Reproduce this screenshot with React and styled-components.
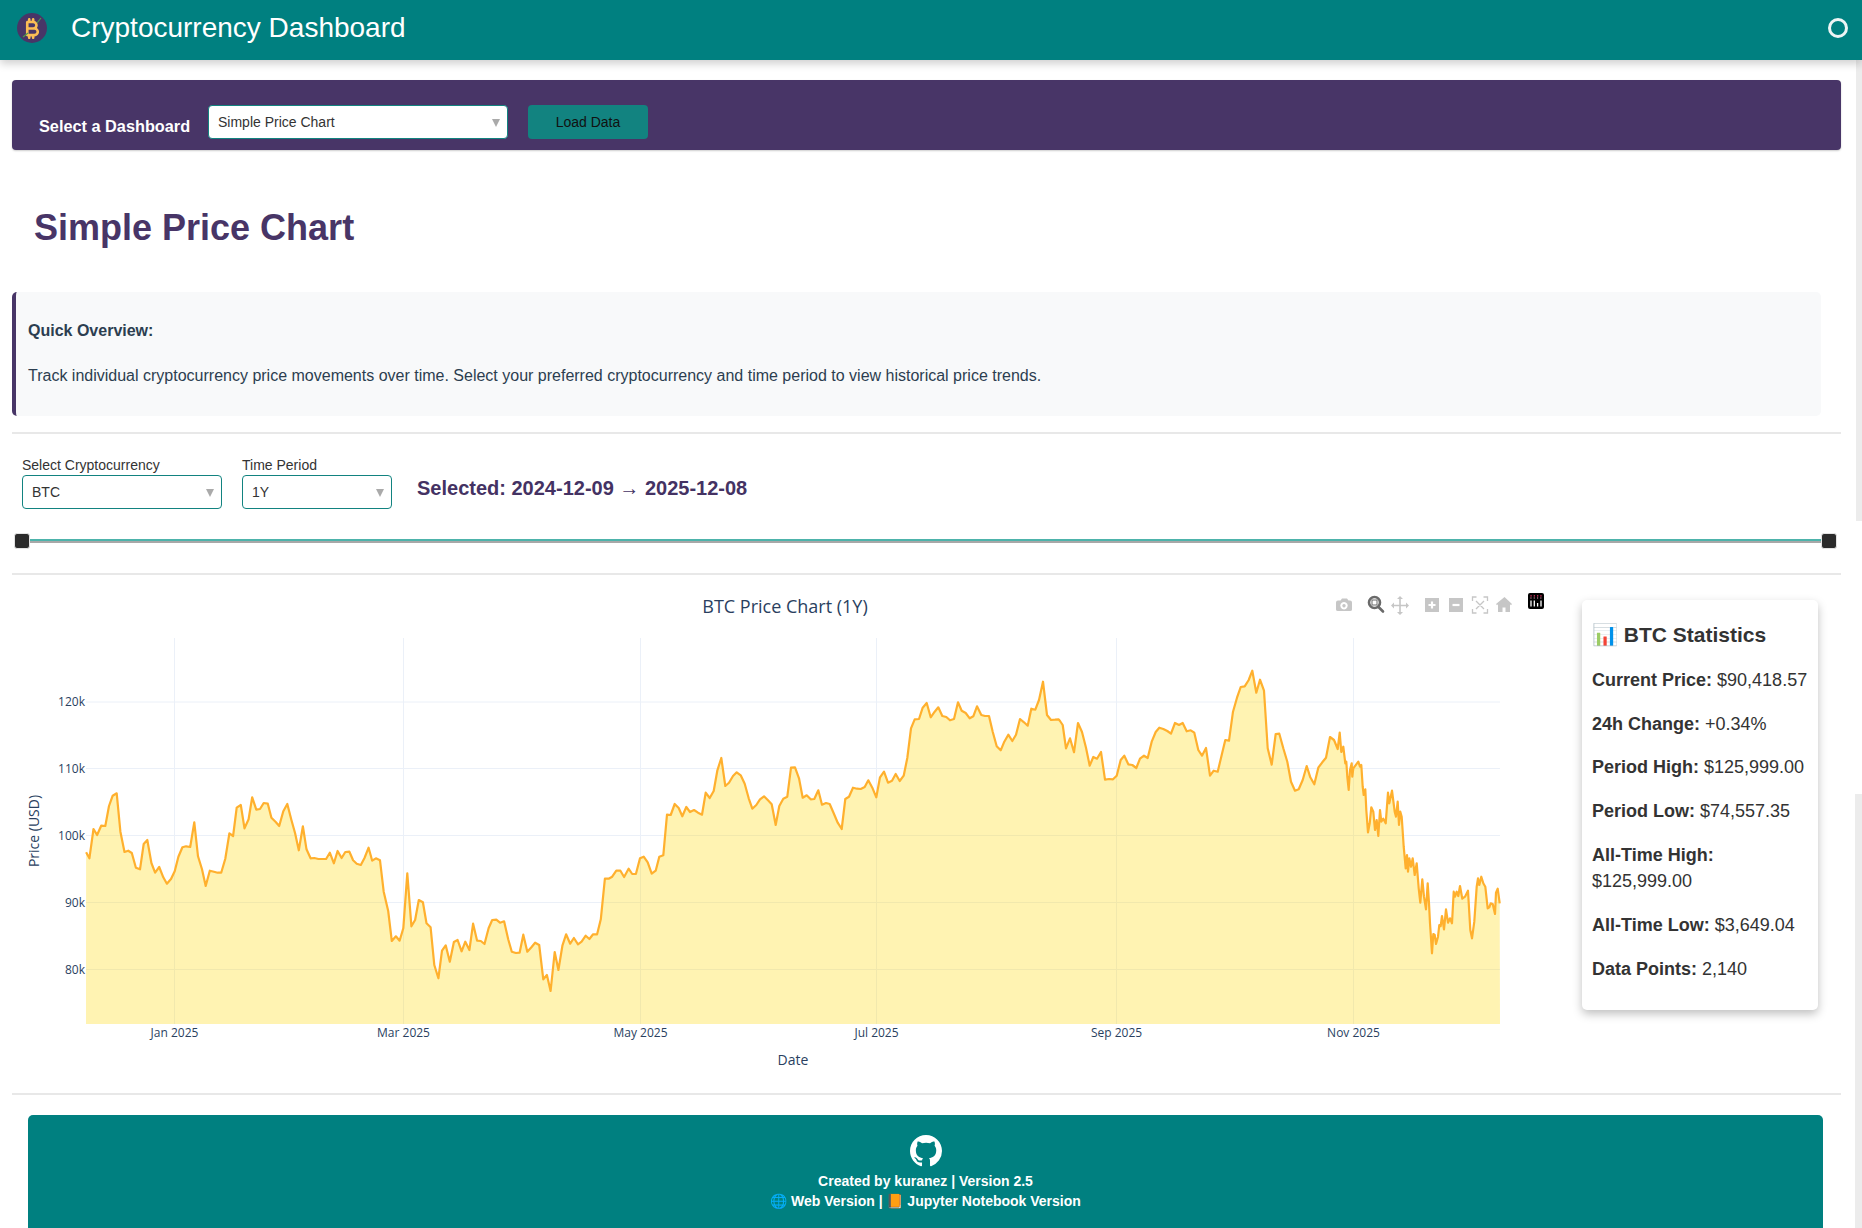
import React from 'react';
import styled, { createGlobalStyle } from 'styled-components';
import { BsGithub } from 'react-icons/bs';
import { FaBitcoinSign } from 'react-icons/fa6';

const GlobalStyle = createGlobalStyle`
  html, body {
    margin: 0;
    padding: 0;
    background: #fff;
    height: 100%;
    overflow: hidden;
  }
  body {
    font-family: "Liberation Sans", Arial, sans-serif;
    color: #212529;
  }
`;

const Page = styled.div`
  position: relative;
  width: 1862px;
  height: 1228px;
  overflow: hidden;
`;

const TopBar = styled.header`
  position: relative;
  z-index: 5;
  height: 60px;
  box-sizing: border-box;
  padding: 0 14px 4px 17px;
  display: flex;
  align-items: center;
  background: #008080;
  color: #fff;
  box-shadow: 0 4px 8px rgba(0, 0, 0, 0.18);
`;

const LogoBadge = styled.div`
  position: relative;
  width: 30px;
  height: 30px;
  border-radius: 50%;
  background: #483567;
  display: flex;
  align-items: center;
  justify-content: center;
  color: #fbbd55;
  font-size: 21px;
`;

const LogoSpark = styled.svg`
  position: absolute;
  inset: 0;
`;

const AppTitle = styled.h1`
  margin: 0 0 0 24px;
  font-size: 28px;
  font-weight: 400;
  line-height: 34px;
  flex: 1;
`;

const StatusRing = styled.div`
  width: 20px;
  height: 20px;
  box-sizing: border-box;
  border: 3px solid #eef5f5;
  border-radius: 50%;
`;

const ScrollStrip = styled.div`
  position: absolute;
  right: 0;
  top: ${(p) => p.$top}px;
  height: ${(p) => p.$height}px;
  width: ${(p) => p.$width}px;
  background: #ececec;
`;

const Main = styled.main`
  padding: 20px 21px 0 12px;
`;

const DashboardBar = styled.section`
  height: 70px;
  box-sizing: border-box;
  padding: 25px 0 0 27px;
  display: flex;
  align-items: flex-start;
  background: #483567;
  border-radius: 4px;
  box-shadow: 0 1px 2px rgba(0, 0, 0, 0.2);
`;

const BarLabel = styled.label`
  width: 169px;
  margin-top: 12px;
  font-size: 16.3px;
  font-weight: 700;
  line-height: 19px;
  color: #fff;
`;

const SelectBox = styled.div`
  position: relative;
  width: ${(p) => p.$width}px;
  height: 34px;
  box-sizing: border-box;
  padding: 0 10px 0 9px;
  display: flex;
  align-items: center;
  background: #fff;
  border: 1px solid #128380;
  border-radius: 4px;
  font-size: 14px;
  color: #333;

  &::after {
    content: '';
    position: absolute;
    right: 7px;
    top: 13px;
    border-left: 4px solid transparent;
    border-right: 4px solid transparent;
    border-top: 8px solid #aaa;
  }
`;

const LoadButton = styled.button`
  width: 120px;
  height: 34px;
  margin-left: 20px;
  padding: 0;
  border: none;
  border-radius: 4px;
  background: #128380;
  color: #111;
  font-family: inherit;
  font-size: 14px;
`;

const PageHeading = styled.h2`
  margin: 57px 0 43px 22px;
  font-size: 36px;
  font-weight: 700;
  line-height: 42px;
  color: #483567;
`;

const OverviewBox = styled.section`
  width: 1809px;
  height: 124px;
  box-sizing: border-box;
  padding: 27px 12px 0;
  background: #f8f9fa;
  border-left: 4px solid #483567;
  border-radius: 5px;
  font-size: 16px;
  line-height: 24px;
  color: #2c3e50;

  p {
    margin: 0 0 21px;
  }
`;

const Divider = styled.hr`
  margin: ${(p) => p.$top}px 0 0;
  height: 2px;
  border: none;
  background: #e8e8e8;
`;

const ControlRow = styled.div`
  margin: 21px 0 0 10px;
  display: flex;
  align-items: flex-start;
  gap: 20px;
`;

const Field = styled.div`
  display: flex;
  flex-direction: column;
`;

const FieldLabel = styled.label`
  font-size: 14px;
  line-height: 20px;
  color: #333;
`;

const SelectedRange = styled.div`
  margin: 23px 0 0 5px;
  font-size: 20px;
  font-weight: 700;
  line-height: 20px;
  color: #443263;

  span {
    font-weight: 400;
  }
`;

const RangeSlider = styled.div`
  position: relative;
  height: 16px;
  margin: 24px 4px 0 2px;
  display: flex;
  align-items: center;
  justify-content: space-between;

  &::before {
    content: '';
    position: absolute;
    left: 8px;
    right: 8px;
    top: 6px;
    height: 2px;
    background: #4db3ab;
    border-bottom: 2px solid #a8a8a8;
  }
`;

const RangeHandle = styled.div`
  position: relative;
  width: 16px;
  height: 16px;
  box-sizing: border-box;
  background: #2b2b2b;
  border: 1px solid #e4e4e4;
  border-radius: 3px;
`;

const ChartRow = styled.div`
  display: flex;
  align-items: flex-start;
  padding-top: 9px;
  height: 500px;
`;

const ChartSvg = styled.svg`
  display: block;
  flex: none;
`;

const TickLabel = styled.text`
  font-family: "Open Sans", sans-serif;
  font-size: 12px;
  fill: #2a3f5f;
`;

const AxisTitle = styled.text`
  font-family: "Open Sans", sans-serif;
  font-size: 14px;
  fill: #2a3f5f;
`;

const ChartTitle = styled.text`
  font-family: "Open Sans", sans-serif;
  font-size: 18px;
  fill: #2a3f5f;
`;

const StatsCard = styled.aside`
  width: 236px;
  height: 410px;
  margin-top: 16px;
  box-sizing: border-box;
  padding: 22px 10px 0;
  background: #fff;
  border-radius: 5px;
  box-shadow: 0 4px 10px rgba(0, 0, 0, 0.25);
  color: #333;
`;

const StatsTitle = styled.h3`
  margin: 0 0 20px;
  font-size: 21px;
  font-weight: 700;
  line-height: 25px;
`;

const StatLine = styled.p`
  margin: 0 0 17.1px;
  font-size: 18px;
  line-height: 26.6px;
`;

const Footer = styled.footer`
  width: 1795px;
  height: 140px;
  margin: 20px 0 0 16px;
  box-sizing: border-box;
  padding-top: 20px;
  display: flex;
  flex-direction: column;
  align-items: center;
  background: #008080;
  border-radius: 5px 5px 0 0;
  color: #fff;
  font-size: 14px;
  font-weight: 700;
  line-height: 20px;

  svg {
    margin-bottom: 4px;
    display: block;
  }
`;

// price trace, read off the chart in three stretches: [x, y] in crop coordinates
const left = [[211,697],[219,715],[229,627],[238,645],[248,617],[258,618],[267,558],[276,527],[286,520],[295,635],[305,696],[314,692],[323,699],[333,743],[343,748],[352,672],[361,660],[371,729],[380,758],[390,741],[400,772],[409,791],[419,777],[428,754],[437,710],[447,682],[456,679],[466,681],[476,607],[485,709],[495,748],[504,798],[514,752],[524,755],[533,758],[542,758],[552,716],[562,640],[571,648],[580,563],[590,555],[599,625],[609,598],[618,532],[628,569],[637,567],[646,549],[656,551],[665,593],[675,605],[684,618],[694,574],[704,552],[714,600],[723,640],[732,691],[742,619],[751,688],[761,715],[770,714],[780,717],[789,717],[799,717],[808,698],[818,730],[827,693],[837,714],[846,696],[856,695],[865,721],[874,731],[884,735],[893,714],[903,683],[912,722],[921,715],[931,721],[940,815],[951,873],[960,963],[970,949],[979,962],[988,925],[998,760],[1008,919],[1017,900],[1026,840],[1036,847],[1045,910],[1055,922],[1064,1035],[1074,1075],[1083,992],[1092,976],[1102,1025],[1112,966],[1121,960],[1131,994],[1140,965],[1150,990],[1159,911],[1169,962],[1178,963],[1187,972],[1197,925],[1206,900],[1216,899],[1225,908],[1235,904],[1245,958],[1254,995],[1264,999],[1273,998],[1282,944],[1292,995],[1302,982],[1311,968],[1321,975],[1331,1078],[1340,1065],[1349,1113],[1359,996],[1368,1050],[1378,977],[1387,943],[1397,971],[1406,954],[1416,973],[1425,965],[1435,947],[1444,957],[1453,943],[1463,943],[1472,898],[1482,776],[1491,776],[1500,770],[1510,752],[1520,752],[1529,771],[1540,746],[1549,762],[1558,762]];
const middle = [[60,715],[71,710],[83,727],[95,761],[107,752],[118,710],[130,706],[141,584],[152,585],[164,552],[176,564],[187,589],[199,561],[210,576],[222,570],[234,578],[246,584],[257,518],[269,534],[281,513],[292,452],[304,414],[316,498],[327,488],[339,468],[350,457],[362,466],[374,491],[386,535],[397,566],[409,555],[420,538],[432,529],[444,541],[455,553],[467,615],[478,558],[490,536],[502,530],[513,443],[525,442],[537,475],[548,533],[560,526],[572,538],[583,537],[595,511],[606,554],[618,549],[629,552],[641,580],[653,608],[665,627],[676,537],[687,530],[699,503],[711,506],[722,507],[734,501],[745,481],[757,503],[769,532],[780,472],[792,455],[804,488],[816,482],[827,462],[839,483],[851,467],[862,414],[873,325],[884,298],[897,297],[908,263],[920,249],[932,292],[944,275],[955,262],[967,288],[979,291],[990,301],[1002,297],[1014,247],[1025,272],[1037,279],[1049,295],[1060,289],[1071,259],[1084,285],[1095,288],[1107,288],[1118,335],[1130,379],[1142,391],[1153,365],[1165,344],[1177,363],[1188,344],[1200,297],[1212,307],[1223,317],[1234,266],[1246,269],[1257,240],[1269,185],[1281,285],[1293,300],[1305,299],[1316,298]];
const right = [[0,303],[8,315],[18,385],[30,355],[42,397],[54,309],[66,336],[78,383],[89,437],[100,411],[111,416],[123,396],[135,479],[147,477],[159,478],[170,467],[182,420],[193,407],[205,433],[217,435],[229,444],[240,416],[252,407],[263,414],[275,365],[287,336],[298,323],[310,327],[322,333],[333,341],[345,309],[357,315],[368,309],[380,334],[392,331],[403,338],[415,390],[426,407],[438,384],[450,467],[461,452],[473,455],[485,405],[496,360],[507,362],[519,275],[531,233],[542,201],[554,199],[566,180],[577,152],[589,218],[600,179],[612,212],[623,385],[635,434],[647,342],[658,341],[670,385],[682,425],[693,485],[705,512],[716,508],[728,480],[740,438],[751,472],[763,493],[775,443],[787,427],[798,413],[810,351],[822,360],[833,387],[839,338],[844,396],[850,380],[856,430],[859,425],[862,470],[866,510],[870,450],[875,430],[877,470],[880,445],[895,425],[900,440],[904,435],[908,500],[911,525],[916,508],[919,570],[924,637],[929,610],[934,562],[940,575],[945,630],[950,600],[955,648],[960,570],[964,605],[970,596],[977,610],[984,518],[988,550],[996,512],[1004,575],[1008,590],[1013,545],[1017,615],[1021,575],[1025,590],[1031,680],[1037,745],[1041,705],[1044,755],[1048,715],[1053,740],[1058,715],[1064,765],[1070,730],[1076,805],[1081,848],[1087,778],[1092,830],[1098,868],[1103,790],[1107,850],[1110,910],[1116,1000],[1120,942],[1124,945],[1128,972],[1134,950],[1138,915],[1142,918],[1146,888],[1152,928],[1158,868],[1164,908],[1170,895],[1176,910],[1181,815],[1185,830],[1190,815],[1195,828],[1200,798],[1207,836],[1215,830],[1224,812],[1231,930],[1236,955],[1243,905],[1250,800],[1254,775],[1258,795],[1264,770],[1270,790],[1276,800],[1283,865],[1288,862],[1292,850],[1298,852],[1305,882],[1308,818],[1313,806],[1319,850]];

const toPage = (pts, fx) => pts.map(([x, y]) => [fx(x), 620 + y / 3]);
const trace = [
  ...toPage(left, (x) => x / 2.45),
  ...toPage(middle, (x) => 620 + x / 3),
  ...toPage(right, (x) => 1060 + x / 3),
];
const linePts = trace.map(([x, y]) => `${x.toFixed(1)},${y.toFixed(1)}`).join(' ');
const plotLeft = 86;
const plotRight = 1500;
const plotTop = 638;
const plotBottom = 1024;
const areaPts = `${plotLeft},${plotBottom} ${linePts} ${plotRight},${plotBottom}`;

const xTicks = [
  [174.5, 'Jan 2025'],
  [403.5, 'Mar 2025'],
  [640.5, 'May 2025'],
  [876.5, 'Jul 2025'],
  [1116.5, 'Sep 2025'],
  [1353.5, 'Nov 2025'],
];
const yTicks = [
  [702, '120k'],
  [768.5, '110k'],
  [835.5, '100k'],
  [902.5, '90k'],
  [969.5, '80k'],
];

function ModeBar() {
  const grey = '#c6c6c6';
  return (
    <g>
      {/* camera */}
      <path fill={grey} fillRule="evenodd" d="M1336 602.5q0-2 2-2h2.5l1.5-2h5l1.500 2h1.500q2 0 2 2v7q0 1.500-2 1.500h-12q-2 0-2-1.500zM1344 602a3.700 3.700 0 1 0 .01 0zM1344 604a1.700 1.700 0 1 1-.01 0z" />
      {/* zoom, active */}
      <circle cx="1374.500" cy="602.500" r="5.500" fill="none" stroke="#6a6a6a" strokeWidth="2.600" />
      <rect x="1372" y="600" width="5" height="5" fill="none" stroke="#6a6a6a" strokeWidth="1" />
      <path d="M1378.500 607l4.500 4.500" stroke="#6a6a6a" strokeWidth="2.600" strokeLinecap="round" />
      {/* pan */}
      <path d="M1400 598v15M1392.500 605.500h15" stroke={grey} strokeWidth="1.600" />
      <path fill={grey} d="M1400 596l3 3h-6zM1400 615l3-3h-6zM1391 605.500l3-3v6zM1409 605.500l-3-3v6z" />
      {/* zoom in */}
      <rect x="1425" y="598" width="14" height="14" fill={grey} />
      <path d="M1432 601.500v7M1428.500 605h7" stroke="#fff" strokeWidth="2.200" />
      {/* zoom out */}
      <rect x="1449" y="598" width="14" height="14" fill={grey} />
      <path d="M1452.500 605h7" stroke="#fff" strokeWidth="2.200" />
      {/* autoscale */}
      <path fill="none" stroke={grey} strokeWidth="1.300" d="M1472.500 601v-4h4M1483.500 597h4v4M1487.500 609v4h-4M1476.500 613h-4v-4M1476 601l8 8M1484 601l-8 8" />
      {/* home */}
      <path fill={grey} d="M1504.500 597l7.500 7-1 1.200-1-.9V612h-4.500v-4.500h-3V612H1498v-7.700l-1 .9-1-1.200z" />
      {/* plotly logo */}
      <rect x="1528" y="593" width="16" height="16" rx="2" fill="#000" />
      <path stroke="#fff" strokeWidth="1.300" d="M1531 600.500v6M1534.300 600.500v6M1537.600 603v3.500M1541 600.500v6" />
      <path stroke="#f0386b" strokeWidth="1.300" strokeDasharray="1.300 2" d="M1530.400 595.800h11.500" />
      <path stroke="#f4a8c0" strokeWidth="1.100" strokeDasharray="1.100 2.200" d="M1530.400 598h11.500" />
    </g>
  );
}

function PriceChart() {
  return (
    <ChartSvg width="1570" height="500" viewBox="12 584 1570 500">
      {yTicks.map(([y]) => (
        <line key={y} x1={plotLeft} x2={plotRight} y1={y} y2={y} stroke="#ebf0f8" strokeWidth="1" />
      ))}
      {xTicks.map(([x]) => (
        <line key={x} x1={x} x2={x} y1={plotTop} y2={plotBottom} stroke="#ebf0f8" strokeWidth="1" />
      ))}
      <polygon points={areaPts} fill="rgba(255, 215, 0, 0.3)" />
      <polyline points={linePts} fill="none" stroke="#ffb02e" strokeWidth="2.200" strokeLinejoin="round" />
      {yTicks.map(([y, label]) => (
        <TickLabel key={label} x="85" y={y + 4} textAnchor="end">{label}</TickLabel>
      ))}
      {xTicks.map(([x, label]) => (
        <TickLabel key={label} x={x} y="1037" textAnchor="middle">{label}</TickLabel>
      ))}
      <ChartTitle x="785" y="613" textAnchor="middle">BTC Price Chart (1Y)</ChartTitle>
      <AxisTitle x="793" y="1065" textAnchor="middle">Date</AxisTitle>
      <AxisTitle x="39" y="831" textAnchor="middle" transform="rotate(-90 39 831)">Price (USD)</AxisTitle>
      <ModeBar />
    </ChartSvg>
  );
}

const stats = [
  ['Current Price:', '$90,418.57'],
  ['24h Change:', '+0.34%'],
  ['Period High:', '$125,999.00'],
  ['Period Low:', '$74,557.35'],
  ['All-Time High:', '$125,999.00'],
  ['All-Time Low:', '$3,649.04'],
  ['Data Points:', '2,140'],
];

export default function App() {
  return (
    <Page>
      <GlobalStyle />
      <TopBar>
        <LogoBadge>
          <LogoSpark viewBox="0 0 30 30" width="30" height="30">
            <path d="M6 24l5-4M20 10l4-5" stroke="#4c9a4c" strokeWidth="1.200" fill="none" />
          </LogoSpark>
          <FaBitcoinSign />
        </LogoBadge>
        <AppTitle>Cryptocurrency Dashboard</AppTitle>
        <StatusRing />
      </TopBar>
      <ScrollStrip $top={60} $height={461} $width={6} />
      <ScrollStrip $top={794} $height={434} $width={7} />

      <Main>
        <DashboardBar>
          <BarLabel>Select a Dashboard</BarLabel>
          <SelectBox $width={300}>Simple Price Chart</SelectBox>
          <LoadButton>Load Data</LoadButton>
        </DashboardBar>

        <PageHeading>Simple Price Chart</PageHeading>

        <OverviewBox>
          <p><strong>Quick Overview:</strong></p>
          <p>Track individual cryptocurrency price movements over time. Select your preferred cryptocurrency and time period to view historical price trends.</p>
        </OverviewBox>

        <Divider $top={16} />

        <ControlRow>
          <Field>
            <FieldLabel>Select Cryptocurrency</FieldLabel>
            <SelectBox $width={200}>BTC</SelectBox>
          </Field>
          <Field>
            <FieldLabel>Time Period</FieldLabel>
            <SelectBox $width={150}>1Y</SelectBox>
          </Field>
          <SelectedRange>Selected: 2024-12-09 <span>→</span> 2025-12-08</SelectedRange>
        </ControlRow>

        <RangeSlider>
          <RangeHandle />
          <RangeHandle />
        </RangeSlider>

        <Divider $top={24} />

        <ChartRow>
          <PriceChart />
          <StatsCard>
            <StatsTitle>📊 BTC Statistics</StatsTitle>
            {stats.map(([label, value]) => (
              <StatLine key={label}><strong>{label}</strong> {value}</StatLine>
            ))}
          </StatsCard>
        </ChartRow>

        <Divider $top={9} />

        <Footer>
          <BsGithub size={32} />
          <div>Created by kuranez | Version 2.5</div>
          <div>🌐 Web Version | 📙 Jupyter Notebook Version</div>
        </Footer>
      </Main>
    </Page>
  );
}
